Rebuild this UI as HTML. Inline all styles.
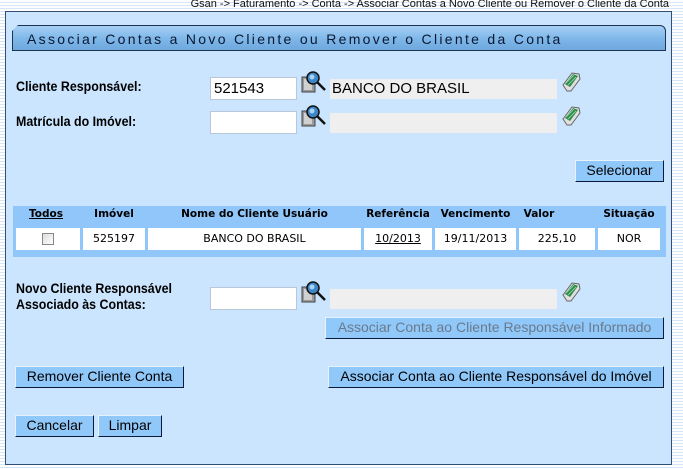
<!DOCTYPE html>
<html><head><meta charset="utf-8"><style>
*{margin:0;padding:0;box-sizing:border-box}
body{width:683px;height:469px;overflow:hidden;position:relative;font-family:"Liberation Sans",Arial,sans-serif;
background:repeating-linear-gradient(to bottom,#fff 0,#fff 2px,#d6e6f6 2px,#d6e6f6 3px);}
.a{position:absolute}
#panel{left:5px;top:11px;width:667px;height:454px;background:#cbe5fe;border:1px solid #334e70}
#hdr{left:12px;top:25px;width:654px;height:26px;background:linear-gradient(#a6d0f6,#80b8ea 50%,#6ea8de);border:1px solid #1f3450;border-radius:6px 6px 0 0;clip-path:polygon(6px 0,100% 0,100% 100%,0 100%,0 6px)}
#hdr span{position:absolute;left:14px;top:5px;font-size:14px;letter-spacing:2.3px;color:#0a1830}
.lbl{font-size:13.5px;font-weight:bold;color:#000;transform:scaleX(.92);transform-origin:left}
.in{background:#fff;border:1px solid #b8c8d8;height:23px}
.ro{background:#efefef;height:20px;font-size:15px;padding:1px 2px}
.btn{background:#90c8fa;border:1px solid;border-color:#e8f2fc #0b1a3a #0b1a3a #e8f2fc;font-size:14px;text-align:center;line-height:19px;color:#000}
.cell{background:#fff;top:228px;height:22px;line-height:22px;text-align:center;font-family:"DejaVu Sans",sans-serif;font-size:11px}
.h{top:208px;font-family:"DejaVu Sans",sans-serif;font-weight:bold;font-size:10.5px;text-align:center}
</style></head><body>
<div class="a" style="right:14px;top:-2px;font-size:11px;color:#111">Gsan -&gt; Faturamento -&gt; Conta -&gt; Associar Contas a Novo Cliente ou Remover o Cliente da Conta</div>
<div class="a" id="panel"></div>
<div class="a" id="hdr"><span>Associar Contas a Novo Cliente ou Remover o Cliente da Conta</span></div>

<svg width="0" height="0" style="position:absolute"><defs>
<g id="lup"><rect x="1" y="6" width="13" height="15" fill="#9a9a9a" stroke="#444"/><rect x="3" y="8" width="8" height="11" fill="#d0d0d0"/><circle cx="12" cy="7" r="6" fill="#3d86c8" stroke="#111" stroke-width="1.5"/><circle cx="11" cy="6" r="2.5" fill="#a8d4f4"/><line x1="16" y1="11" x2="24" y2="19" stroke="#111" stroke-width="2.5"/></g>
<g id="er"><path d="M5 20 L1 14 L10 2 L17 3 L18 8 L9 20Z" fill="#e0e0e0" stroke="#666"/><path d="M3 13 L11 3 L16 5 L8 16Z" fill="#2d8a4a"/><path d="M4 12 L12 4 M6 14 L14 6" stroke="#8fd0a0" stroke-width="1"/></g>
</defs></svg>

<div class="a lbl" style="left:16px;top:79px">Cliente Responsável:</div>
<div class="a in" style="left:210px;top:77px;width:87px;font-size:15px;padding:2px 3px">521543</div>
<svg class="a" style="left:301px;top:71px" width="26" height="24"><use href="#lup"/></svg>
<div class="a ro" style="left:330px;top:79px;width:227px">BANCO DO BRASIL</div>
<svg class="a" style="left:562px;top:71px" width="20" height="22"><use href="#er"/></svg>

<div class="a lbl" style="left:16px;top:114px">Matrícula do Imóvel:</div>
<div class="a in" style="left:210px;top:111px;width:87px"></div>
<svg class="a" style="left:301px;top:105px" width="26" height="24"><use href="#lup"/></svg>
<div class="a ro" style="left:330px;top:113px;width:227px"></div>
<svg class="a" style="left:562px;top:105px" width="20" height="22"><use href="#er"/></svg>

<div class="a btn" style="left:575px;top:160px;width:89px;height:22px">Selecionar</div>

<div class="a" style="left:13px;top:206px;width:653px;height:51px;background:#90c6f9"></div>
<div class="a h" style="left:16px;width:60px;text-decoration:underline">Todos</div>
<div class="a h" style="left:83px;width:62px">Imóvel</div>
<div class="a h" style="left:148px;width:213px">Nome do Cliente Usuário</div>
<div class="a h" style="left:364px;width:68px">Referência</div>
<div class="a h" style="left:435px;width:81px">Vencimento</div>
<div class="a h" style="left:519px;width:40px">Valor</div>
<div class="a h" style="left:598px;width:62px">Situação</div>
<div class="a cell" style="left:16px;width:64px"><span style="display:inline-block;width:12px;height:12px;border:1px solid #888;background:linear-gradient(135deg,#ddd,#fff);vertical-align:middle"></span></div>
<div class="a cell" style="left:83px;width:62px">525197</div>
<div class="a cell" style="left:148px;width:213px">BANCO DO BRASIL</div>
<div class="a cell" style="left:364px;width:68px;text-decoration:underline">10/2013</div>
<div class="a cell" style="left:435px;width:81px">19/11/2013</div>
<div class="a cell" style="left:519px;width:76px">225,10</div>
<div class="a cell" style="left:598px;width:62px">NOR</div>

<div class="a lbl" style="left:16px;top:281px;line-height:16px">Novo Cliente Responsável<br>Associado às Contas:</div>
<div class="a in" style="left:210px;top:287px;width:87px"></div>
<svg class="a" style="left:301px;top:281px" width="26" height="24"><use href="#lup"/></svg>
<div class="a ro" style="left:330px;top:289px;width:227px"></div>
<svg class="a" style="left:562px;top:281px" width="20" height="22"><use href="#er"/></svg>

<div class="a btn" style="left:325px;top:317px;width:339px;height:22px;color:#6a7a8c">Associar Conta ao Cliente Responsável Informado</div>
<div class="a btn" style="left:15px;top:366px;width:169px;height:22px">Remover Cliente Conta</div>
<div class="a btn" style="left:328px;top:366px;width:336px;height:22px">Associar Conta ao Cliente Responsável do Imóvel</div>
<div class="a btn" style="left:15px;top:415px;width:79px;height:22px">Cancelar</div>
<div class="a btn" style="left:98px;top:415px;width:64px;height:22px">Limpar</div>
</body></html>
